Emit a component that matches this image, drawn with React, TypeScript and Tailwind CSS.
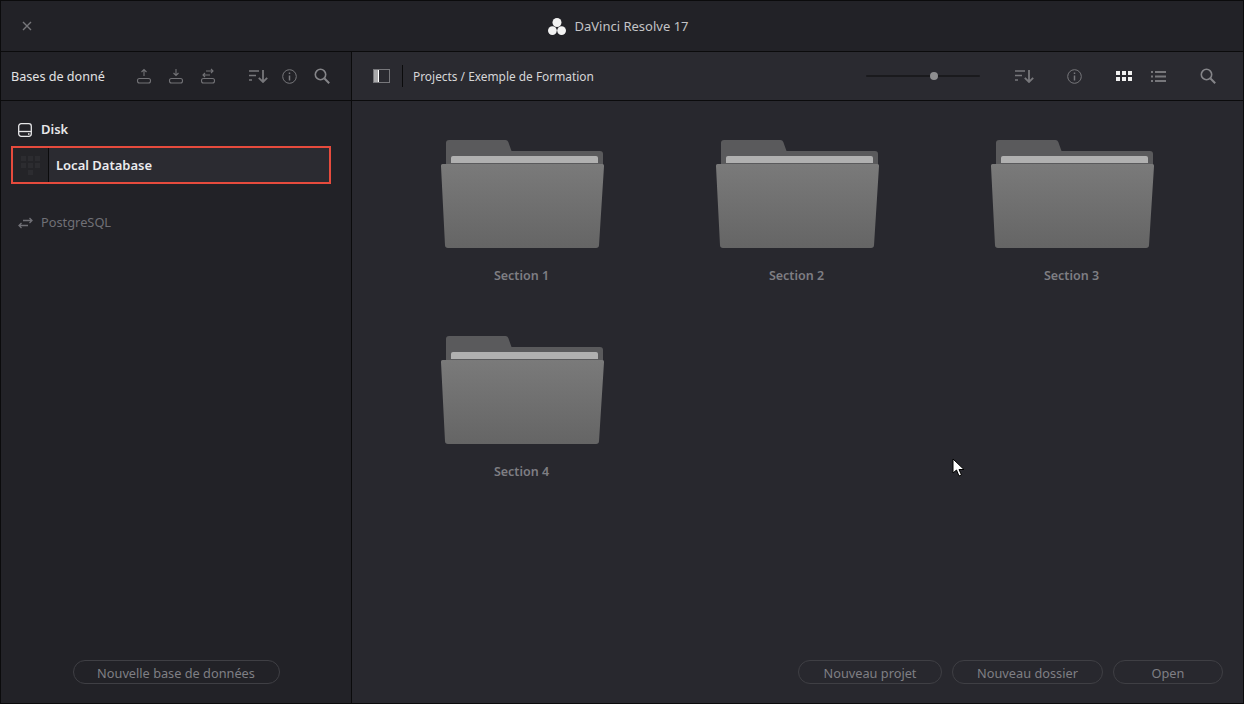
import React from "react"

const Upload = ({ kind }: { kind: "up" | "down" | "swap" }) => (
  <svg width="16" height="18" viewBox="0 0 16 18" fill="none" stroke="#727276" strokeWidth="1.1">
    <rect x="1.500" y="11.500" width="13" height="4.500" rx="2" />
    {kind === "up" && <path d="M8 9V2.500M5.500 5 8 2.500 10.500 5" />}
    {kind === "down" && <path d="M8 2v6.500M5.500 6 8 8.500 10.500 6" />}
    {kind === "swap" && <path d="M6 4h7M11 2l2 2-2 2M10 8H3M5 6 3 8l2 2" />}
  </svg>
)

const Sort = () => (
  <svg width="19" height="14" viewBox="0 0 19 14" fill="none" stroke="#77777b">
    <path d="M0 2h10M0 6.500h7M0 11h3" strokeWidth="1.600" />
    <path d="M14 1v12M9.800 8.800 14 13l4.200-4.200" strokeWidth="1.800" />
  </svg>
)

const Info = () => (
  <svg width="15" height="15" viewBox="0 0 15 15" fill="none" stroke="#77777b">
    <circle cx="7.500" cy="7.500" r="6.800" strokeWidth="1" />
    <path d="M7.500 6.500v5" strokeWidth="1.500" />
    <path d="M7.500 3.500v1.500" strokeWidth="1.500" />
  </svg>
)

const Search = () => (
  <svg width="16" height="16" viewBox="0 0 16 16" fill="none" stroke="#858589">
    <circle cx="6.500" cy="6.500" r="5.200" strokeWidth="1.600" />
    <path d="m10.500 10.500 4.700 4.700" strokeWidth="2" />
  </svg>
)

const Logo = () => (
  <svg width="18" height="17" viewBox="0 0 18 17" fill="#f2f2f2">
    <circle cx="9" cy="4.500" r="4.500" />
    <circle cx="4.400" cy="12.600" r="4.400" />
    <circle cx="13.600" cy="12.600" r="4.400" />
  </svg>
)

const Folder = ({ id }: { id: number }) => (
  <svg width="163" height="108" viewBox="0 0 163 108" className="block">
    <defs>
      <linearGradient id={`front${id}`} x1="0" y1="0" x2="0" y2="1">
        <stop offset="0" stopColor="#7a7a7a" />
        <stop offset="1" stopColor="#656565" />
      </linearGradient>
    </defs>
    <path
      d="M5 3a3 3 0 0 1 3-3h56.500a3 3 0 0 1 2.800 2l3.200 9H159a3 3 0 0 1 3 3v12H5z"
      fill="#5a5a5c"
    />
    <path d="M10 18a2 2 0 0 1 2-2h143a2 2 0 0 1 2 2v5H10z" fill="#b0b0b0" />
    <path
      d="M2 24h159a2 2 0 0 1 2 2.200l-5 79a3 3 0 0 1-3 2.800H7a3 3 0 0 1-3-2.800L0 26.200A2 2 0 0 1 2 24z"
      fill={`url(#front${id})`}
    />
  </svg>
)

const FolderItem = ({ id }: { id: number }) => (
  <div className="flex flex-col items-center h-[196px]">
    <Folder id={id} />
    <span className="mt-[19px] pr-[2px] text-[12.500px] leading-[18px] font-semibold text-[#7e7e83]">
      Section {id}
    </span>
  </div>
)

const PillButton = ({ label, width }: { label: string; width: string }) => (
  <button className={`${width} h-[24px] pt-[2px] rounded-full border border-[#3f3f44] text-[12.750px] leading-none text-[#7f7f84]`}>
    {label}
  </button>
)

export default function App() {
  return (
    <div
      className="w-[1244px] h-[704px] flex flex-col overflow-hidden border border-[#0b0b0c] bg-[#222227] font-['Noto_Sans',sans-serif]"
    >
      {/* title bar */}
      <header className="h-[51px] shrink-0 relative flex items-center justify-center border-b border-[#0b0b0c]">
        <span className="absolute left-[21px] top-[20px] text-[#77777b]">
          <svg width="10" height="10" viewBox="0 0 10 10" stroke="currentColor" strokeWidth="1.400" className="block">
            <path d="m1 1 8 8M9 1 1 9" />
          </svg>
        </span>
        <div className="flex items-center gap-[9px] text-[13px] text-[#c4c4c6] pr-[8px]">
          <Logo />
          <span className="pt-px">DaVinci Resolve 17</span>
        </div>
      </header>

      <div className="flex-1 flex min-h-0">
        {/* sidebar */}
        <aside className="w-[351px] shrink-0 flex flex-col border-r border-[#0b0b0c]">
          <div className="h-[49px] shrink-0 flex items-center pl-[10px] border-b border-[#0b0b0c]">
            <span className="w-[125px] pt-[2px] text-[12.600px] text-[#e2e2e4] whitespace-nowrap">Bases de donné</span>
            <div className="flex items-center gap-[16px]">
              <Upload kind="up" />
              <Upload kind="down" />
              <Upload kind="swap" />
            </div>
            <div className="flex items-center ml-[33px]">
              <Sort />
              <span className="ml-[14px]"><Info /></span>
              <span className="ml-[17px]"><Search /></span>
            </div>
          </div>

          <div className="flex-1 flex flex-col pt-[20px] px-[10px]">
            <div className="flex items-center h-[18px] pl-[7px] gap-[9px] text-[13px] font-semibold text-[#e6e6e8]">
              <svg width="14" height="14" viewBox="0 0 14 14" fill="none" stroke="#e6e6e8" strokeWidth="1.300">
                <rect x="0.700" y="0.700" width="12.600" height="12.600" rx="2.500" />
                <path d="M0.700 8.500h12.600" />
                <path d="M10 11h1.500" />
              </svg>
              Disk
            </div>
            <div className="mt-[7px] w-[320px] h-[38px] flex items-center border-2 border-[#e64b3d] bg-[#2b2b31]">
              <div className="w-[36px] h-full flex items-center justify-center bg-[#242428] border-r border-[#0b0b0c]">
                <svg width="20" height="20" viewBox="0 0 20 20" fill="#2c2c30">
                  <rect x="0" y="1" width="5" height="5" />
                  <rect x="7" y="1" width="5" height="5" />
                  <rect x="14" y="1" width="5" height="5" />
                  <rect x="0" y="8" width="5" height="5" />
                  <rect x="7" y="8" width="5" height="5" />
                  <rect x="14" y="8" width="5" height="5" />
                  <rect x="7" y="15" width="5" height="5" />
                </svg>
              </div>
              <span className="ml-[7px] pt-px text-[13px] font-semibold text-[#ececee]">Local Database</span>
            </div>
            <div className="mt-[30px] flex items-center h-[18px] pl-[7px] gap-[8px] text-[12.800px] text-[#707076]">
              <svg width="15" height="12" viewBox="0 0 15 12" fill="none" stroke="#707076" strokeWidth="1.300">
                <path d="M5 3.500h9M11.500 1 14 3.500 11.500 6M10 8.500H1M3.500 6 1 8.500 3.500 11" />
              </svg>
              PostgreSQL
            </div>
          </div>

          <div className="h-[60px] shrink-0 flex justify-center pt-[17px]">
            <PillButton label="Nouvelle base de données" width="w-[207px]" />
          </div>
        </aside>

        {/* main */}
        <main className="flex-1 min-w-0 flex flex-col bg-[#28282e]">
          <div className="h-[49px] shrink-0 flex items-center border-b border-[#0b0b0c] bg-[#2a2a30]">
            <div className="ml-[21px] w-[17px] h-[14px] flex border border-[#77777b]">
              <span className="w-[5px] bg-[#a9a9ab] border-r border-white" />
            </div>
            <span className="ml-[12px] h-[22px] border-l border-[#0b0b0c]" />
            <span className="ml-[10px] w-[180px] pt-px whitespace-nowrap text-[11.900px] text-[#d6d6d8]">Projects / Exemple de Formation</span>

            <div className="ml-[273px] w-[114px] h-[2px] relative bg-[#1a1a1d] rounded-full">
              <span className="absolute left-[64px] -top-[3px] w-[8px] h-[8px] rounded-full bg-[#8e8e90]" />
            </div>
            <span className="ml-[35px]"><Sort /></span>
            <span className="ml-[33px]"><Info /></span>
            <div className="ml-[34px] grid grid-cols-3 gap-[2px]">
              {[0, 1, 2, 3, 4, 5].map((n) => (
                <span key={n} className="w-[4px] h-[4px] bg-[#f0f0f0]" />
              ))}
            </div>
            <svg className="ml-[19px]" width="15" height="11" viewBox="0 0 15 11" fill="#77777b">
              <rect x="0" y="0" width="2" height="2" />
              <rect x="4" y="0" width="11" height="2" />
              <rect x="0" y="4.500" width="2" height="2" />
              <rect x="4" y="4.500" width="11" height="2" />
              <rect x="0" y="9" width="2" height="2" />
              <rect x="4" y="9" width="11" height="2" />
            </svg>
            <span className="ml-[34px]"><Search /></span>
          </div>

          <div className="flex-1 relative flex flex-col min-h-0">
            <div className="flex-1 grid grid-cols-[275px_275px_275px] content-start pl-[33px] pt-[39px]">
              {[1, 2, 3, 4].map((id) => (
                <FolderItem key={id} id={id} />
              ))}
            </div>
            <div className="h-[60px] shrink-0 flex justify-end gap-[10px] pr-[20px] pt-[17px]">
              <PillButton label="Nouveau projet" width="w-[144px]" />
              <PillButton label="Nouveau dossier" width="w-[151px]" />
              <PillButton label="Open" width="w-[110px]" />
            </div>

            {/* mouse pointer */}
            <svg className="absolute left-[600px] top-[357px]" width="13" height="19" viewBox="0 0 13 19">
              <path d="M1 1v14l3.500-3 2.500 6 2.500-1-2.500-5.500H12z" fill="#fff" stroke="#000" strokeWidth="1" />
            </svg>
          </div>
        </main>
      </div>
    </div>
  )
}
